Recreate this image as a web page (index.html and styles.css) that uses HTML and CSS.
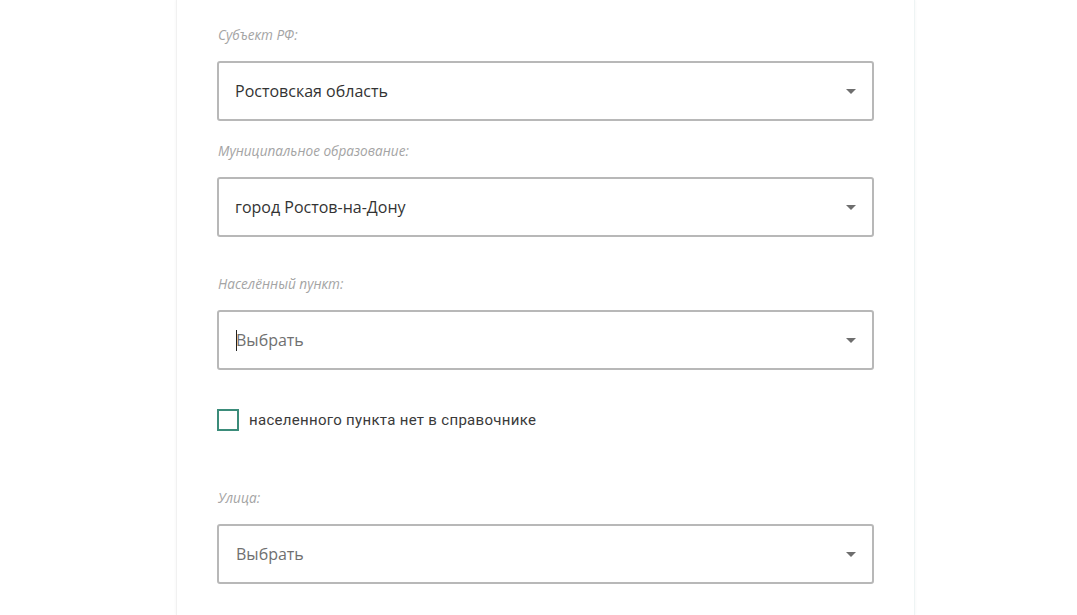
FILE: index.html
```html
<!DOCTYPE html>
<html lang="ru">
<head>
<meta charset="utf-8">
<link rel="stylesheet" href="styles.css">
</head>
<body>
<div class="page">
  <div class="card">
    <div class="field">
      <div class="label">Субъект РФ:</div>
      <div class="select"><span class="value">Ростовская область</span><span class="caret"></span></div>
    </div>
    <div class="field field-2">
      <div class="label">Муниципальное образование:</div>
      <div class="select"><span class="value">город Ростов-на-Дону</span><span class="caret"></span></div>
    </div>
    <div class="field field-3">
      <div class="label">Населённый пункт:</div>
      <div class="select"><span class="cursor"></span><span class="placeholder">Выбрать</span><span class="caret"></span></div>
    </div>
    <label class="check">
      <span class="box"></span>
      <span class="check-text">населенного пункта нет в справочнике</span>
    </label>
    <div class="field field-4">
      <div class="label">Улица:</div>
      <div class="select"><span class="placeholder">Выбрать</span><span class="caret"></span></div>
    </div>
  </div>
</div>
</body>
</html>
```

FILE: styles.css
```css
html, body {
  margin: 0;
  padding: 0;
  background: #ffffff;
  height: 615px;
  overflow: hidden;
}
.page {
  padding-left: 176px;
}
.card {
  width: 657px;
  height: 590px;
  padding: 25px 40px 0 40px;
  background: #ffffff;
  border-left: 1px solid #f1f1f1;
  border-right: 1px solid #eef4f4;
  box-shadow: 0 0 3px rgba(0, 40, 40, 0.05);
  display: flex;
  flex-direction: column;
  font-family: "Open Sans", sans-serif;
  overflow: hidden;
}
.field {
  display: flex;
  flex-direction: column;
  flex-shrink: 0;
}
.field-2 { margin-top: 20px; }
.field-3 { margin-top: 37px; }
.field-4 { margin-top: 57px; }
.label {
  font-style: italic;
  font-size: 13.6px;
  line-height: 20px;
  color: #a4a4a4;
  padding-left: 1px;
  margin-bottom: 16px;
}
.select {
  height: 56px;
  border: 2px solid #b8b8b8;
  border-radius: 3px;
  display: flex;
  align-items: center;
  padding: 0 16px;
  position: relative;
}
.value {
  flex: 1;
  font-size: 16px;
  color: #333333;
}
.placeholder {
  flex: 1;
  font-size: 16px;
  color: #707070;
  padding-left: 1px;
}
.cursor {
  position: absolute;
  left: 17px;
  top: 18px;
  width: 1px;
  height: 21px;
  background: #222;
}
.caret {
  width: 0;
  height: 0;
  border-left: 5px solid transparent;
  border-right: 5px solid transparent;
  border-top: 5px solid #6e6e6e;
  margin-right: 0;
}
.check {
  margin-top: 39px;
  display: flex;
  align-items: center;
  gap: 10px;
  font-family: Roboto, sans-serif;
  flex-shrink: 0;
}
.box {
  width: 18px;
  height: 18px;
  border: 2px solid #3b8c7a;
  box-sizing: content-box;
}
.check-text {
  font-size: 15px;
  color: #3a3a3a;
  letter-spacing: 0.3px;
}
```
